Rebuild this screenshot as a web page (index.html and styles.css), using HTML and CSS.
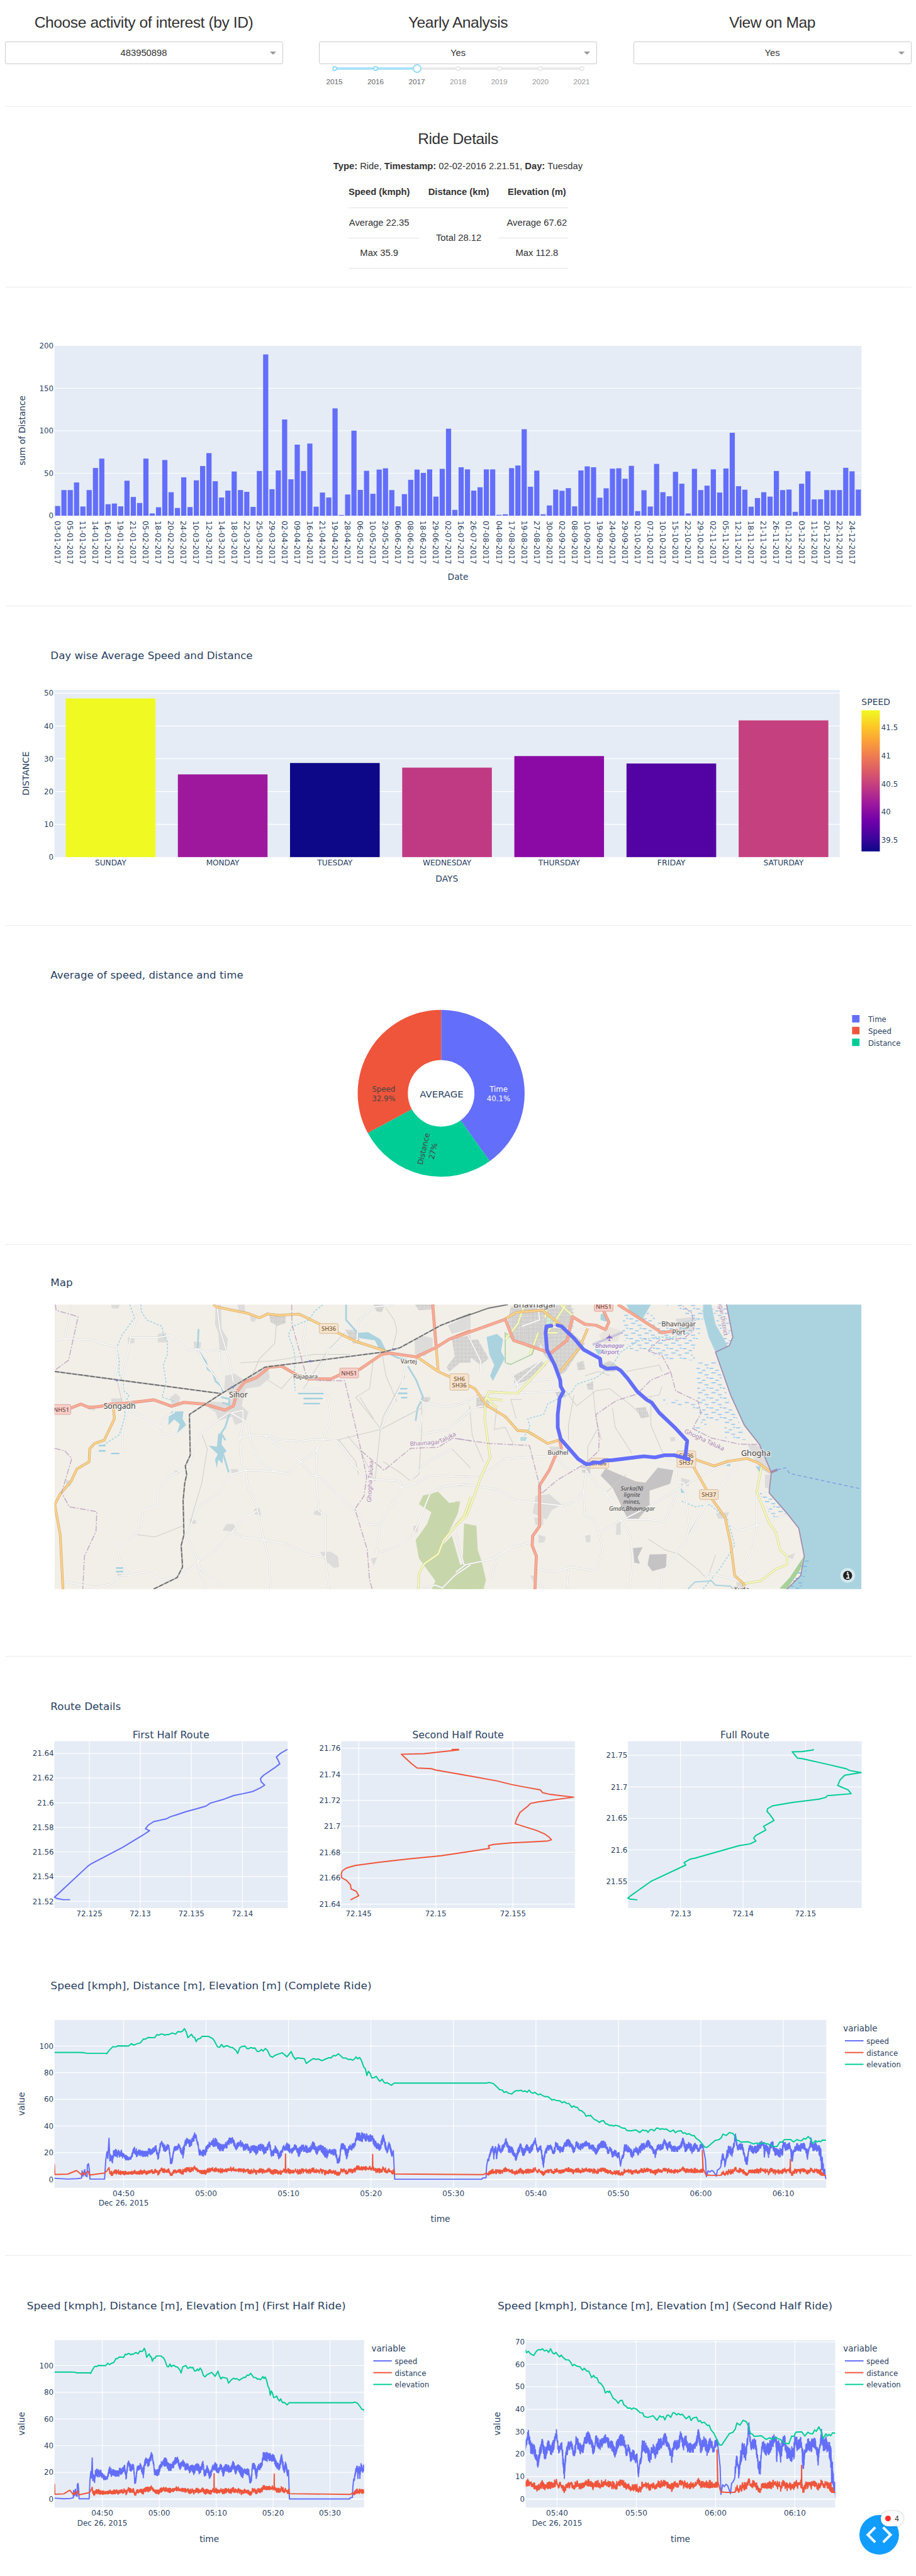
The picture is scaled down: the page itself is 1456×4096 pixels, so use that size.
FILE: index.html
```html
<!DOCTYPE html>
<html lang="en">
<head>
<meta charset="utf-8">
<title>Ride Dashboard</title>
<link rel="stylesheet" href="styles.css">
</head>
<body>
<header class="controls">
  <div class="control">
    <h5>Choose activity of interest (by ID)</h5>
    <div class="select"><span>483950898</span><i class="caret"></i></div>
  </div>
  <div class="control">
    <h5>Yearly Analysis</h5>
    <div class="select"><span>Yes</span><i class="caret"></i></div>
    <div class="slider">
      <div class="stop on"><i class="dot"></i><b>2015</b></div>
      <div class="stop on"><i class="dot"></i><b>2016</b></div>
      <div class="stop on current"><i class="dot"></i><b>2017</b></div>
      <div class="stop"><i class="dot"></i><b>2018</b></div>
      <div class="stop"><i class="dot"></i><b>2019</b></div>
      <div class="stop"><i class="dot"></i><b>2020</b></div>
      <div class="stop"><i class="dot"></i><b>2021</b></div>
    </div>
  </div>
  <div class="control">
    <h5>View on Map</h5>
    <div class="select"><span>Yes</span><i class="caret"></i></div>
  </div>
</header>
<hr>
<section class="details">
  <h5>Ride Details</h5>
  <p><strong>Type:</strong> Ride, <strong>Timestamp:</strong> 02-02-2016 2.21.51, <strong>Day:</strong> Tuesday</p>
  <table>
    <colgroup><col class="c1"><col class="c2"><col class="c3"></colgroup>
    <thead><tr><th class="left">Speed (kmph)</th><th>Distance (km)</th><th class="right">Elevation (m)</th></tr></thead>
    <tbody>
      <tr><td class="left">Average 22.35</td><td rowspan="2">Total 28.12</td><td class="right">Average 67.62</td></tr>
      <tr><td class="left">Max 35.9</td><td class="right">Max 112.8</td></tr>
    </tbody>
  </table>
</section>
<hr>
<svg class="chart" id="yearly" viewBox="0 580 1849 643"></svg>
<hr>
<svg class="chart" id="weekday" viewBox="0 1224 1849 643"></svg>
<hr>
<svg class="chart" id="average" viewBox="0 1868 1849 643"></svg>
<hr>
<svg class="chart" id="map" viewBox="0 2512 1849 831"></svg>
<hr>
<svg class="chart" id="route" viewBox="0 3344 1849 563"></svg>
<svg class="chart" id="complete" viewBox="0 3907 1849 645"></svg>
<hr>
<div class="last">
  <svg class="chart" id="halves" viewBox="0 4553 1849 647"></svg>
  <div class="debug">
    <svg viewBox="0 0 80 80"><path d="M32 25 17 40 32 55M48 25 63 40 48 55"/></svg>
    <span class="errors"><i></i>4</span>
  </div>
</div>
<script src="script.js"></script>
</body>
</html>
```
FILE: styles.css
```css
* { box-sizing: border-box; }
body {
  margin: 0;
  width: 1456px;
  height: 4096px;
  overflow: hidden;
  background: #fff;
  color: #323232;
  font-family: "Liberation Sans", Arial, sans-serif;
  font-size: 14.76px;
}
hr { height: 1px; margin: 0 7.5px; border: 0; background: #ebebeb; }
h5 { margin: 0; font-size: 24.6px; font-weight: 400; line-height: 28px; letter-spacing: -.42px; text-align: center; }

.controls { display: grid; grid-template-columns: repeat(3, 442px); justify-content: space-between; height: 169px; padding: 22px 7.5px 0; }
.control { padding: 0; }
.select { position: relative; display: flex; align-items: center; justify-content: center; height: 35.5px; margin-top: 16px; border: 1px solid #ccc; border-radius: 3px; }
.caret { position: absolute; right: 10px; top: 14.5px; border: 5px solid transparent; border-top-color: #999; border-bottom: 0; }

.slider { display: grid; grid-template-columns: repeat(7, 65.5px); justify-content: center; margin: 0 -10px; padding-top: 2px; }
.stop { position: relative; display: flex; flex-direction: column; align-items: center; height: 36px; color: #999; font-size: 11.8px; }
.stop b { font-weight: 400; margin-top: 19px; line-height: 14px; height: 14px; }
.stop::before { content: ""; position: absolute; top: 3px; left: 50%; width: 65.5px; height: 4px; background: #e9e9e9; }
.stop:last-child::before { display: none; }
.on { color: #666; }
.on:not(.current)::before { background: #abe2fb; }
.dot { position: absolute; z-index: 1; top: 1px; width: 8px; height: 8px; border: 2px solid #e9e9e9; border-radius: 50%; background: #fff; }
.on .dot { border-color: #96dbfa; }
.current .dot { top: -2px; width: 14px; height: 14px; }

.details { display: flex; flex-direction: column; align-items: center; height: 286px; padding-top: 37px; }
.details p { margin: 18px 0 0; line-height: 22px; }
table { width: 349px; margin-top: 6px; table-layout: fixed; border-collapse: collapse; line-height: 18px; }
.c1 { width: 112.4px; }
.c2 { width: 126.4px; }
.c3 { width: 110.2px; }
th, td { padding: 0; text-align: center; border-bottom: 1px solid #e1e1e1; white-space: nowrap; }
th { height: 49px; }
td { height: 48px; }
.left { padding-right: 14px; }
.right { padding-left: 12px; }

.chart { display: block; width: 1456px; overflow: hidden; font-family: "DejaVu Sans", Verdana, sans-serif; }
.last { position: relative; }
.debug { position: absolute; left: 1366px; top: 412px; width: 63px; height: 63px; border-radius: 50%; background: #119dff; }
.debug svg { display: block; width: 63px; height: 63px; fill: none; stroke: #fff; stroke-width: 5; }
.errors { position: absolute; left: 34px; top: -6px; width: 36px; height: 24px; display: flex; align-items: center; justify-content: center; gap: 6px; border-radius: 12px; background: #fff; box-shadow: 0 0 3px rgba(0,0,0,.3); font-size: 12px; }
.errors i { width: 9px; height: 9px; border-radius: 50%; background: #ff2d2d; }
```
FILE: script.js
```js
const INK = '#2a3f5f', BG = '#e5ecf6', BLUE = '#636efa', RED = '#ef553b', GREEN = '#00cc96';
const $ = id => document.getElementById(id);
const rect = (x, y, w, h, fill, extra = '') => `<rect x="${x}" y="${y}" width="${w}" height="${h}" fill="${fill}" ${extra}/>`;
const line = (x1, y1, x2, y2, c = '#fff', w = 1.5) => `<path d="M${x1} ${y1}L${x2} ${y2}" stroke="${c}" stroke-width="${w}" fill="none"/>`;
function text(x, y, s, size = 15, o = {}) {
  return `<text x="${x}" y="${y}" dy="${size * .36}" font-size="${size}" text-anchor="${o.a || 'middle'}" fill="${o.fill || INK}"` +
    (o.rot ? ` transform="rotate(${o.rot} ${x} ${y})"` : '') +
    (o.w ? ` textLength="${o.w}" lengthAdjust="spacingAndGlyphs"` : '') + ` ${o.x || ''}>${s}</text>`;
}
const poly = (pts, c, w = 2.5, extra = '') =>
  `<polyline points="${pts.map(p => p.map(v => v.toFixed(1)).join(',')).join(' ')}" fill="none" stroke="${c}" stroke-width="${w}" stroke-linejoin="round" ${extra}/>`;
const parse = s => s.trim().split(/\s+/).map(p => p.split(',').map(Number));
const frame = (x0, y0, sx, sy) => s => parse(s).map(([x, y]) => [x0 + x * sx, y0 + y * sy]);

/* Yearly distance */
{
  const tops = [1067,977,977,934,1070,977,852,799,1057,1053,1069,924,1016,1050,799,1109,1074,807,989,1078,905,1073,922,841,768,927,1019,980,872,977,987,1072,869,210,972,866,578,916,720,869,714,1071,991,1019,515,1118,1002,641,976,868,998,861,854,977,1069,1000,919,861,880,860,1014,857,630,1089,848,860,980,961,860,860,1117,1114,853,838,633,958,867,1114,1064,974,981,966,1069,866,843,848,1020,967,856,854,913,840,1096,978,1070,829,989,1012,874,941,1109,857,977,952,860,991,855,653,955,975,1071,1022,989,1014,869,977,974,1100,941,871,1030,1029,977,977,977,851,871,974];
  const dates = '03-01 05-01 11-01 14-01 16-01 19-01 21-01 05-02 18-02 20-02 24-02 10-03 12-03 14-03 18-03 22-03 25-03 29-03 02-04 09-04 16-04 21-04 19-04 28-04 06-05 10-05 29-05 06-06 08-06 18-06 29-06 02-07 16-07 26-07 07-08 04-08 17-08 19-08 27-08 30-08 02-09 08-09 10-09 19-09 24-09 29-09 02-10 07-10 10-10 15-10 22-10 29-10 02-11 05-11 12-11 18-11 21-11 26-11 01-12 03-12 11-12 20-12 22-12 24-12'.split(' ');
  let s = rect(110, 698, 1629, 343, BG);
  for (let v = 0; v <= 200; v += 50) {
    const y = 1041 - v * 1.715;
    if (v && v < 200) s += line(110, y, 1739, y);
    s += text(108, y, v, 15, { a: 'end' });
  }
  const step = 1629 / 128;
  tops.forEach((t, i) => { const h = (1122 - t) * .3571; s += rect(110 + step * (i + .09), 1041 - h, step * .82, h, BLUE); });
  dates.forEach((d, i) => { s += text(110 + step * (2 * i + .5) - .5, 1051, d + '-2017', 15, { a: 'start', rot: 90, w: 88 }); });
  s += text(44.5, 869, 'sum of Distance', 17.5, { rot: -90, w: 141 }) + text(924.5, 1164, 'Date', 17.5);
  $('yearly').innerHTML = s;
}

/* Weekday averages */
{
  let s = rect(110, 1393, 1585, 337.5, BG) + text(102, 1323.5, 'Day wise Average Speed and Distance', 21.25, { a: 'start', w: 408 });
  for (let v = 0; v <= 50; v += 10) {
    const y = 1730.5 - v * 6.62;
    if (v) s += line(110, y, 1695, y);
    s += text(108, y, v, 15, { a: 'end' });
  }
  [['SUNDAY', 360, '#f0f921', 63], ['MONDAY', 820, '#9e189d', 67], ['TUESDAY', 751, '#0d0887', 71], ['WEDNESDAY', 779, '#c03a83', 98],
   ['THURSDAY', 709, '#8b0aa5', 84], ['FRIDAY', 754, '#5302a3', 57], ['SATURDAY', 493, '#c5407e', 81]].forEach(([d, t, c, w], i) => {
    const h = (1321 - t) / 3;
    s += rect(110 + 226.4 * (i + .1), 1730.5 - h, 181, h, c) + text(110 + 226.4 * (i + .5), 1742, d, 15, { w });
  });
  const plasma = ['#0d0887', '#46039f', '#7201a8', '#9c179e', '#bd3786', '#d8576b', '#ed7953', '#fb9f3a', '#fdca26', '#f0f921'];
  s += `<linearGradient id="plasma" x1="0" y1="1" x2="0" y2="0">${plasma.map((c, i) => `<stop offset="${i / 9}" stop-color="${c}"/>`).join('')}</linearGradient>`;
  s += rect(1739, 1434, 37, 285, 'url(#plasma)') + text(1739, 1416.5, 'SPEED', 17.5, { a: 'start', w: 58 });
  [['41.5', 1469], ['41', 1525.6], ['40.5', 1583], ['40', 1639], ['39.5', 1696]].forEach(([v, y]) => s += text(1779, y, v, 15, { a: 'start' }));
  s += text(52, 1561.5, 'DISTANCE', 17.5, { rot: -90, w: 89 }) + text(902, 1774.5, 'DAYS', 17.5);
  $('weekday').innerHTML = s;
}

/* Donut */
{
  const cx = 890.5, cy = 2206.3, R = 168.5, r = 67.3;
  const at = (q, p) => `${cx + q * Math.sin(p * 2 * Math.PI)} ${cy - q * Math.cos(p * 2 * Math.PI)}`;
  const slice = (a, b, c) => `<path fill="${c}" d="M${at(R, a)}A${R} ${R} 0 0 1 ${at(R, b)}L${at(r, b)}A${r} ${r} 0 0 0 ${at(r, a)}Z"/>`;
  let s = text(102, 1967, 'Average of speed, distance and time', 21.25, { a: 'start', w: 389 });
  s += slice(0, .401, BLUE) + slice(.401, .671, GREEN) + slice(.671, 1, RED);
  s += text(1006.5, 2198, 'Time', 15, { fill: '#fff' }) + text(1006.5, 2216.7, '40.1%', 15, { fill: '#fff' });
  s += text(774.5, 2198, 'Speed', 15, { fill: '#444' }) + text(774.5, 2216.7, '32.9%', 15, { fill: '#444' });
  s += text(855, 2318.5, 'Distance', 15, { fill: '#444', rot: -77 }) + text(874, 2323, '27%', 15, { fill: '#444', rot: -77 });
  s += text(891.5, 2207.5, 'AVERAGE', 18.75, { w: 88 });
  [['Time', BLUE], ['Speed', RED], ['Distance', GREEN]].forEach(([n, c], i) => {
    s += rect(1720, 2048.3 + i * 23.8, 15, 15, c) + text(1752.5, 2057 + i * 23.8, n, 15, { a: 'start' });
  });
  $('average').innerHTML = s;
}

/* Map */
{
  const A = frame(80, 2560, .5548, .4337), B = frame(920, 2560, .5548, .4337);
  const area = (p, c, extra = '') => `<polygon points="${p.map(q => q.join(',')).join(' ')}" fill="${c}" ${extra}/>`;
  const road = (list, f, inner, w, casing, cw) => list.map(p => poly(f(p), casing, cw)).join('') + list.map(p => poly(f(p), inner, w)).join('');
  const minor = (list, f) => list.map(p => poly(f(p), '#cfcecb', 1.3)).join('');
  const NOTO = 'font-family="Noto Sans" stroke="#f5f2ed" stroke-width="2.5" paint-order="stroke"';
  const label = (f, p, s, size, o = {}) => { const [x, y] = f(p)[0]; return text(x, y, s, size, { fill: '#444', x: NOTO, ...o }); };
  const shield = (f, p, rows, red) => {
    const [x, y] = f(p)[0], h = rows.length > 1 ? 33 : 20;
    return rect(x - 19, y - h / 2, 38, h, red ? '#f6cfc8' : '#f6e3cd', `rx="2.5" stroke="${red ? '#dfa297' : '#d9b88f'}" stroke-width="1.2"`) +
      rows.map((r, i) => text(x, y + (i - (rows.length - 1) / 2) * 13.5, r, 12, { fill: red ? '#7c4a45' : '#7a5c38', x: 'font-family="Noto Sans" font-weight="500"' })).join('');
  };
  let s = text(102, 2588.6, 'Map', 21.25, { a: 'start' });
  s += `<defs><clipPath id="mc"><rect x="110" y="2633" width="1629" height="574.5"/></clipPath>
    <pattern id="wet" width="27" height="20" patternUnits="userSpaceOnUse"><path d="M1 2h8M13 6h7M5 11h9M18 15h8M22 1h4" stroke="#55a8ee" stroke-width="1.2"/></pattern>
    <pattern id="res" width="8" height="8" patternUnits="userSpaceOnUse"><rect width="8" height="8" fill="#dbdad8"/><path d="M0 3h8M3 0v8M6 3v5" stroke="#c8c7c5" stroke-width="1"/></pattern></defs><g clip-path="url(#mc)">`;
  s += rect(110, 2633, 1629, 575, '#f2efe9');

  /* settlements */
  ['640,170 660,170 662,280 685,330 680,380 655,390 650,300 638,260','675,500 710,490 745,520 830,460 838,510 800,550 750,560 735,640 760,670 750,710 710,730 700,690 650,710 640,670 615,650 620,620 690,625 700,600 672,560','475,600 495,582 512,600 505,635 480,635','430,305 460,300 462,345 430,345','560,340 588,345 585,372 562,372','320,320 345,320 345,348 322,350','260,170 292,170 285,188 262,186','260,605 300,605 300,630 262,630','170,635 205,640 200,662 175,655','720,168 745,168 748,205 725,200','765,215 795,225 780,252 768,245','665,1220 680,1190 705,1190 715,1215 700,1225','780,1120 800,1115 806,1150 782,1145','1000,1130 1025,1125 1022,1152 996,1145','1020,1320 1060,1320 1085,1340 1090,1390 1070,1395 1040,1360','1110,285 1150,285 1165,350 1140,350','1365,330 1395,315 1430,325 1430,375 1400,410 1365,400','1485,265 1568,215 1568,280 1500,305','545,1165 570,1175 568,1190 550,1188','95,985 118,990 112,1015 98,1010','485,940 510,945 505,958','695,935 722,935 720,955 700,955','280,1420 300,1425 290,1442','1360,1200 1378,1195 1375,1230 1360,1225','1205,1350 1228,1345 1215,1385'].forEach(p => s += area(A(p), '#dddcdb'));
  ['835,215 895,215 895,255 865,268 840,250','1365,168 1440,168 1430,190 1380,195','1215,168 1255,170 1245,205 1225,200','1500,330 1568,310 1568,440 1530,440 1490,480 1480,460 1510,410','1115,290 1160,295 1165,345 1135,340','1390,600 1422,600 1415,625 1392,622'].forEach(p => s += area(A(p), 'url(#res)'));
  ['200,180 420,170 430,240 420,300 470,350 440,400 420,440 400,480 375,500 345,440 320,400 310,350 300,380 210,340 195,290 190,240','0,340 80,330 120,420 90,450 60,420 0,400','345,400 420,420 400,480 380,480','210,500 310,430 330,450 250,530 215,550','525,450 560,430 585,450 580,480 540,480','475,540 500,525 500,565 482,565','360,570 395,575 400,600 370,600','75,590 115,590 125,650 75,650','440,440 465,430 470,470 445,475','655,650 690,645 705,690 675,700','455,915 490,925 490,955 460,950'].forEach(p => s += area(B(p), 'url(#res)'));
  ['340,830 385,830 400,870 350,875','290,1060 340,1050 385,1100 350,1125 330,1170 280,1140','285,1160 318,1160 318,1195 290,1195','300,1240 328,1250 322,1275 302,1278','585,1180 600,1180 600,1240 583,1240','830,845 820,890 835,895','945,1140 995,1135 985,1165 955,1165','820,975 850,985 848,1015 820,1010','1060,815 1110,830 1135,920 1145,960 1105,930 1080,870','1125,960 1145,960 1145,1030 1125,1020','800,235 870,225 860,290 815,300','470,1245 490,1240 490,1275 475,1275','270,1430 290,1430 285,1465','1205,1340 1235,1325 1225,1355','1020,1460 1060,1465 1050,1493 1025,1493','780,785 798,785 798,805 782,805'].forEach(p => s += area(B(p), '#dddcdb'));

  /* woods, mine and airport */
  s += area(A('1395,1058 1450,1040 1490,1092 1530,1085 1522,1140 1465,1290 1500,1245 1530,1380 1545,1380 1545,1188 1568,1195 1568,1500 1425,1500 1440,1455 1380,1350 1368,1265 1410,1190 1425,1135 1380,1098'), '#c8d7ab');
  s += area(B('0,1085 15,1087 0,1165'), '#c8d7ab') + area(B('30,1188 75,1198 80,1310 95,1370 110,1450 100,1500 0,1500 0,1405 25,1375'), '#c8d7ab');
  ['545,932 655,992 690,998 735,928 792,940 780,1003 705,1035 705,1105 665,1165 625,1165 570,1020 527,965','645,1303 680,1298 662,1345 670,1375 650,1370','705,1332 767,1330 765,1392 715,1410 698,1380'].forEach(p => s += area(B(p), '#c5c3c4'));
  s += area(B('520,310 560,272 600,290 590,340 540,350'), '#e9e5de') + poly(B('498,355 608,297'), '#c9c7dc', 5);
  s += area(B('335,210 352,218 352,250 330,262'), '#cbf0d8') + area(B('180,300 215,340 285,375 278,400 200,447 180,440'), '#edf0e2', 'stroke="#a6cfa2" stroke-width="2"');

  /* wetlands */
  ['610,200 680,240 700,200 740,250 900,260 880,330 860,400 880,430 740,420 700,385 640,385 605,320','760,168 900,168 900,235 850,240 830,200','930,170 985,170 1005,330 985,360 960,290','875,440 950,430 990,600 1060,800 980,790 975,705 890,715 880,620','750,600 880,630 885,660 760,630','865,740 900,710 920,715 880,775','1100,1030 1150,1050 1205,1150 1150,1165','1265,1345 1285,1355 1255,1500 1215,1490'].forEach(p => s += area(B(p), 'url(#wet)'));
  [['940,583 1035,583','960,606 1030,606','960,630 1020,630'], ['1305,560 1338,560','1303,582 1338,582','1315,602 1338,602'], ['215,825 240,825','215,850 240,850','260,862 290,862'], ['278,1395 304,1395','278,1412 304,1412']].flat().forEach(p => s += poly(A(p), '#9fd0e0', 3));

  /* water */
  s += area(B('985,168 1476,168 1476,1500 1200,1500 1255,1430 1268,1340 1248,1210 1205,1140 1140,1045 1148,950 1105,820 1050,730 1000,590 945,390 995,360 1008,320'), '#aad3df');
  s += area(B('1265,1343 1255,1400 1205,1493 1178,1490 1215,1440'), '#a8d09a') + area(B('1268,1345 1285,1355 1258,1500 1215,1495'), 'url(#wet)');
  s += area(B('900,168 930,168 945,260 990,362 945,390 920,320 900,220'), '#aad3df') + area(B('620,168 710,168 680,235 640,210'), '#aad3df');
  s += area(B('112,320 150,305 172,330 165,385 178,420 145,500 135,525 125,500 140,450 122,400'), '#aad3df') + area(B('527,215 540,208 555,235 545,248 527,240'), '#aad3df') + area(B('505,375 545,380 520,405'), '#aad3df') + area(B('1090,920 1110,925 1105,950'), '#aad3df') + area(B('985,900 1000,905 998,922 985,920'), '#aad3df') + area(B('818,1020 833,1045 820,1045'), '#aad3df');
  s += area(A('480,667 523,665 520,700 533,730 500,768 510,725 490,703 468,730 470,690'), '#aad3df') + area(A('650,768 665,775 662,820 680,850 668,865 665,910 650,890 645,930 638,890 648,865 615,825 645,830'), '#aad3df');
  s += area(A('1150,300 1195,297 1240,330 1260,380 1290,400 1265,400 1235,375 1220,335 1165,325'), '#aad3df');
  ['1115,168 1115,240 1155,298','1255,385 1300,415 1335,425','1340,455 1370,520 1395,600 1375,650 1368,710','578,283 575,380 605,435 612,470 630,485 640,525 662,550 668,580','660,600 690,608 690,635 665,625','690,680 675,740 660,768 676,800','668,865 688,950'].forEach(p => s += poly(A(p), '#aad3df', 3.6));
  s += poly(B('845,1493 870,1460 930,1455 945,1475 1000,1480 1010,1493'), '#aad3df', 2.5);
  ['328,168 345,230 300,310 280,370 290,430 288,490 305,530 305,570 325,590 310,630 310,690 290,775 235,820','368,168 370,200 390,240 445,270 450,310 465,340 465,400 450,450 460,530 445,600 495,620','1030,170 1000,200 980,240 920,270 905,310 925,380 930,430 925,500 930,570'].forEach(p => s += poly(A(p), '#9fd4e4', 2, 'stroke-dasharray="4 3"'));
  ['900,235 830,250 800,320 730,320 660,340 600,390 570,450 510,510 440,540 420,580 335,630 320,680 262,700 270,740 245,790','822,1083 870,1110 925,1100 990,1170 1015,1290 960,1400 900,1493'].forEach(p => s += poly(B(p), '#9fd4e4', 2, 'stroke-dasharray="4 3"'));
  s += area(B('235,785 260,785 255,803 235,803'), '#b9dce4');

  /* minor roads */
  s += minor(['283,530 300,620','590,770 610,840 590,1000 555,1150 540,1230','355,1240 420,1250 520,1200','865,220 855,350 800,420 770,510','1215,420 1200,560 1150,600 1240,745 1250,690 1330,500','1240,745 1220,990 1165,845 1120,780','1165,600 1215,700','1110,300 1050,380 1000,480 960,560','830,520 880,560 920,500','1390,600 1390,760 1380,960 1350,990','1240,350 1260,500 1300,620','1500,840 1568,930','1260,185 1290,240 1300,290 1285,370','1080,800 1240,750 1390,650','1040,800 1090,800 1150,900 1160,960','1250,900 1310,950 1350,990','730,440 850,430 1000,400 1130,400'], A);
  s += minor(['400,570 440,640 510,570 560,560 640,640 680,690','570,650 580,740 640,860','710,600 710,730 760,880','515,750 480,830 480,900','620,480 740,450 750,480','50,640 60,780 100,900','150,640 140,750 180,740 210,820','410,800 410,730 430,590','500,570 510,700 530,800','620,960 550,1040','700,1260 760,1310 810,1330 880,1400 910,1440','945,1335 920,1430','920,1080 850,1230','470,500 520,480 560,500','220,700 200,610 240,610','750,550 740,590 690,600'], B);
  for (let i = 0; i < 9; i++) s += minor([`${215 + i * 22},${190 + (i % 3) * 20} ${225 + i * 20},${330 + (i % 4) * 14}`, `205,${205 + i * 16} 430,${190 + i * 16}`], B);

  /* local roads */
  s += road(['55,333 90,328 190,333 240,355 278,365 285,430 275,500','115,168 92,325','350,168 365,175 350,240 330,320 320,400 300,520 305,600 320,660 300,770 303,850','330,322 430,322 475,312 540,380 575,375 600,390 645,378 680,390','645,168 655,280 690,430 705,530','655,390 655,450 675,490','575,378 600,440 650,520 680,590','320,660 375,690 440,740 455,785 500,765','490,640 490,670 450,700 440,740','690,670 600,750 560,840 545,920 470,970 430,1030 430,1100 375,1130 370,1200 350,1235 285,1310 290,1350 325,1425','700,672 740,660 740,720 728,790 770,775 840,780 870,798 950,805 1000,795 1080,800 1130,900 1190,980 1310,990 1318,1020 1240,1190 1225,1330','695,672 760,720 765,790 800,900 860,950','820,780 950,900 990,965 1020,970 1080,1050 1150,1130 1190,1190 1235,1195','728,790 735,910 750,940 760,1030 790,1110 815,1260 835,1360 840,1493','690,960 750,940 850,945 900,955 950,900 1000,860 1030,800 1060,700 1050,600 1020,560 960,570','690,960 650,1050 575,1110 535,1240 570,1340 585,1400 655,1470','1010,830 1005,960 1015,1130 1040,1150 1040,1340 1052,1493','790,1130 750,1155 700,1225 640,1310 580,1360 565,1385 500,1440 440,1450 390,1412 320,1430 290,1432 260,1470 200,1485 90,1458','575,1385 605,1493','700,1225 740,1250 820,1265 890,1280 980,1335 1040,1345','1310,1020 1370,1000 1420,965 1568,970','1350,990 1400,910 1500,840','1225,1328 1310,1290 1360,1240 1420,1050 1470,1015 1568,1005','1370,600 1400,625 1480,645 1568,620','1330,445 1320,530 1240,750','1390,770 1490,750 1530,700 1568,665','1385,760 1390,690 1415,620','1390,1490 1440,1475 1465,1488 1510,1430 1568,1380','1510,1210 1530,1320 1545,1380','1290,170 1215,180 1160,245 1155,330 1050,380 1010,530','970,250 960,320 975,430 1000,520'], A, '#fff', 1.9, '#d0cfcc', 3.1);
  s += road(['40,300 90,430 90,480','0,640 70,600 120,590','0,720 60,650 100,640','180,440 225,540 225,580','225,580 375,572','215,540 310,430','300,180 305,240 240,270','345,270 400,280 440,290 500,270','340,400 360,500 345,570','110,590 260,525 350,515','0,1005 60,1010 150,1030 220,1080 390,1105 430,1085 465,1040 475,940','0,970 90,972 180,885 380,870 390,860','475,940 520,1020 570,1080 600,1170 635,1240 645,1370 632,1493','465,1040 470,1150 505,1175 520,1230 535,1310 510,1410','520,1235 600,1175 700,1110 820,1020 950,925 1000,905','620,1170 700,1170 760,1180 810,1030','740,870 800,900 805,990 830,1000 850,1200 840,1260 750,1420 745,1493','475,935 400,930 350,850','1040,895 910,1100 850,1240','1095,1040 1095,1200 1080,1310 1040,1430','990,1185 1035,1220 1095,1195 1205,1145','0,1415 35,1380 130,1355 200,1300 295,1270','0,1240 30,1380','150,1350 130,1440','290,1395 360,1415 420,1390 510,1410','410,1400 405,1493','295,1450 320,1493','1020,1450 920,1420 905,1440'], B, '#fff', 1.9, '#d0cfcc', 3.1);

  /* tertiary, state and national roads */
  s += road(['1568,1065 1545,1150 1470,1265 1450,1330 1400,1375 1380,1420 1378,1500'], A, '#f6fabb', 3, '#cfcf98', 4.6);
  s += road(['250,170 225,260 180,330','380,168 425,220','400,168 350,270 330,300 370,300','330,185 325,230','300,300 270,400','335,430 225,582 120,575 108,610 105,700 125,880 90,975 70,1050 40,1150 0,1200','110,605 170,615','150,650 110,600','1112,925 1095,1040 1140,1185 1165,1230 1180,1310 1205,1340 1205,1380 1165,1400 1110,1455 1048,1468'], B, '#f6fabb', 3, '#cfcf98', 4.6);
  s += road(['632,168 645,180 760,210 800,230 830,212 870,218 945,213 1020,260 1150,340 1260,385','1370,410 1450,480 1500,510 1568,550','1443,370 1450,480','268,640 272,700 235,800 200,815 182,840 180,900 135,935 115,990 75,1050 55,1100 75,1240 85,1500'], A, '#fbd18b', 3.6, '#d3a863', 5.2);
  s += road(['180,235 220,205 315,195 360,240 420,310','480,280 450,370 380,480','45,545 70,560 110,635 180,690 225,755 260,758 335,815 380,798','850,880 940,920 990,898 1060,885 1100,905 1148,950','850,890 930,1070 980,1160 1000,1280 1015,1430 1048,1470 1048,1500'], B, '#fbd18b', 3.6, '#d3a863', 5.2);
  s += road(['55,660 110,652 150,632 180,648 220,643 260,632 310,628 415,612 480,642 525,624 600,632 675,660 705,640 720,570 745,530 790,508 835,460 880,455 940,500 980,515 1060,515 1110,485 1165,470 1245,400 1275,395 1370,412 1440,370 1490,330 1568,290','1430,168 1443,370'], A, '#f6ab96', 4.5, '#e28a75', 6);
  s += road(['0,320 180,237 210,335 280,365 345,395 405,335 425,225 470,260 510,265 545,285 557,250 535,190','590,168 750,300 808,288','378,800 385,840','365,865 340,940 305,1010 305,1200 280,1245 278,1290 293,1340 288,1500'], B, '#f6ab96', 4.5, '#e28a75', 6);

  /* railway and boundaries */
  ['55,480 660,583','415,1493 500,1440 520,1390 515,1290 525,1240 522,1080 528,1000 535,960 530,920 548,870 545,680 662,583 820,460 1250,390 1310,370 1460,265 1568,212'].forEach(p => { s += poly(A(p), '#b5b5b5', 3) + poly(A(p), '#666', 2, 'stroke-dasharray="9 3"'); });
  s += poly(B('0,238 120,185 190,168'), '#777', 2.4);
  ['281,521','702,553','984,432','1287,377'].forEach(p => { const [x, y] = A(p)[0]; s += rect(x - 2.5, y - 2, 5, 4, '#7a7fc0'); });
  const bd = 'stroke-dasharray="12 3 3 3" opacity=".8"';
  ['57,168 60,195 140,225 105,428 55,475','55,838 92,850 117,885 80,1045 108,1110 208,1133 205,1225 163,1340 157,1493','917,168 918,260 970,500 1020,523 1110,523 1170,850 1190,970 1180,1060 1147,1120 1192,1310 1200,1450 1210,1493','1170,850 1253,940 1350,838 1450,833 1503,790 1568,803'].forEach(p => s += poly(A(p), '#b79bbb', 1.9, bd));
  ['0,792 120,815 268,825 312,1048 370,985 470,910 520,850 522,790 510,680 585,615 660,585 710,520 782,483 750,405 698,385 740,335 830,325 865,290 860,210 820,168','782,483 800,570 882,620 892,675 862,745 930,790 1030,818 1105,820'].forEach(p => s += poly(B(p), '#b79bbb', 1.9, bd));
  s += poly(B('985,168 1008,320 995,360 945,390 1000,590 1050,730 1105,820 1148,950 1140,1045 1205,1140 1248,1210 1268,1340 1255,1430 1200,1500'), '#a08aae', 2.2);
  s += poly(B('1145,950 1170,937'), '#a08aae', 5) + poly(B('1170,937 1200,928 1215,955 1476,1027'), '#7a95e6', 1.6, 'stroke-dasharray="7 5"');

  s += shield(A, '79,657', ['NH51'], 1) + shield(A, '1126,487', ['NH51'], 1) + shield(A, '1052,280', ['SH36']) + shield(A, '1527,529', ['SH6', 'SH36']);
  s += shield(B, '538,177', ['NH51'], 1) + shield(B, '522,907', ['SH36']) + shield(B, '839,888', ['SH36', 'SH37']) + shield(B, '921,1053', ['SH37']);
  s += label(A, '291,641', 'Songadh', 15.5) + label(A, '723,589', 'Sihor', 15.5) + label(A, '967,502', 'Rajapara', 12) + label(A, '1343,433', 'Vartej', 12);
  s += label(B, '288,168', 'Bhavnagar', 17) + label(B, '811,260', 'Bhavnagar', 13.5) + label(B, '811,297', 'Port', 13.5) + label(B, '1092,861', 'Ghogha', 16) + label(B, '372,856', 'Budhel', 12.5) + label(B, '1040,1493', 'Kuda', 12.5);
  const air = { fill: '#8461c4', x: NOTO + ' font-style="italic"' };
  s += label(B, '560,359', 'Bhavnagar', 12, air) + label(B, '560,390', 'Airport', 12, air) + label(B, '560,322', '✈', 19, { rot: -90, fill: '#8461c4', x: 'font-family="DejaVu Sans"' });
  ['Surka(N)', 'lignite', 'mines,', 'Gmdc,Bhavnagar'].forEach((t, i) => s += label(B, `641,${1024 + i * 31}`, t, 12, { x: 'font-family="Noto Sans" font-style="italic"' }));
  const pur = { fill: '#a785b0' };
  s += label(A, '1402,812', 'Bhavnagar', 12, { ...pur, rot: -4 }) + label(A, '1484,787', 'Taluka', 12, { ...pur, rot: -27 }) + label(A, '1202,992', 'Ghogha Taluka', 12, { ...pur, rot: -87 });
  s += label(B, '905,798', 'Ghogha Taluka', 12.5, { ...pur, rot: 25 }) + label(B, '973,235', 'agar District', 12, { ...pur, rot: 80 });

  /* ride track */
  s += poly(B('348,267 330,270 327,300 332,380 360,450 380,520 382,550 392,573 378,605 371,680 371,740 382,795 445,887 475,912 490,910 500,903 525,905 540,895 570,893 685,875 725,880 760,870 795,870 848,889'), BLUE, 7.5, 'stroke-linecap="round"');
  s += poly(B('370,265 385,270 430,325 465,378 525,420 528,453 550,467 585,464 600,476 625,512 660,573 695,612 713,625 740,672 800,745 842,803 835,880'), BLUE, 7.5, 'stroke-linecap="round"');
  s += '<circle cx="1711" cy="3180" r="15" fill="#fff" opacity=".5"/><circle cx="1711" cy="3180" r="9.2" fill="#222"/><path d="M1709 3178h3.5v7M1708 3185.500h7" stroke="#fff" stroke-width="2.2" fill="none"/><circle cx="1711" cy="3174.500" r="1.6" fill="#fff"/></g>';
  $('map').innerHTML = s;
}

/* Route details */
{
  const sx = 1849 / 1568, F = frame(0, 3420, sx, 1 / 3);
  let s = text(102, 3444.5, 'Route Details', 21.25, { a: 'start', w: 142 });
  const panel = (l, r, name, w, xs, ys, c, pts) => {
    s += rect(l * sx, 3515, (r - l) * sx, 337, BG) + text((l + r) / 2 * sx, 3501.5, name, 20, { w });
    xs.forEach(([v, x]) => s += line(x * sx, 3515, x * sx, 3852) + text(x * sx, 3863, v, 15));
    ys.forEach(([v, y]) => s += line(l * sx, 3420 + y / 3, r * sx, 3420 + y / 3) + text((l - 1) * sx, 3420 + y / 3, v, 15, { a: 'end' }));
    s += poly(F(pts), c, 2.5);
  };
  panel(93, 492.5, 'First Half Route', 155, [['72.125', 153], ['72.13', 240], ['72.135', 327.5], ['72.14', 415]],
    [['21.64', 359], ['21.62', 508], ['21.6', 658], ['21.58', 806.5], ['21.56', 955], ['21.54', 1105], ['21.52', 1255]], BLUE,
    '120,1245 108,1245 98,1238 93,1230 98,1215 110,1175 150,1043 155,1030 210,928 245,853 256,827 249,815 254,793 263,772 284,756 292,742 302,731 318,712 335,696 352,679 360,660 381,639 400,614 417,602 433,589 446,567 453,551 447,530 446,511 451,492 470,446 479,422 476,400 473,381 480,359 492,334');
  panel(584, 984, 'Second Half Route', 185, [['72.145', 614], ['72.15', 746], ['72.155', 878]],
    [['21.76', 327.5], ['21.74', 486], ['21.72', 643], ['21.7', 799], ['21.68', 958], ['21.66', 1114], ['21.64', 1271.5]], RED,
    '600,1246 614,1221 610,1195 601,1180 600,1155 593,1128 585,1112 584,1090 586,1070 593,1053 608,1038 650,1018 700,998 755,979 800,955 838,934 836,918 845,910 875,901 910,895 938,889 944,882 940,866 933,848 918,825 882,785 884,760 890,717 903,680 908,662 922,652 982,624 940,606 929,597 925,580 900,564 875,547 850,525 800,493 746,460 738,451 714,447 704,420 695,390 687,364 726,361 755,349 785,338 785,334 773,335');
  panel(1075, 1475, 'Full Route', 99, [['72.13', 1165], ['72.14', 1272], ['72.15', 1379]],
    [['21.75', 370], ['21.7', 562], ['21.65', 752], ['21.6', 943], ['21.55', 1135]], GREEN,
    '1091,1246 1079,1242 1075,1235 1080,1220 1114,1135 1174,1035 1171,1020 1181,1000 1190,993 1265,918 1284,907 1294,890 1290,872 1294,855 1311,823 1307,801 1325,765 1320,740 1318,730 1313,710 1314,693 1322,677 1358,655 1402,636 1414,625 1416,615 1457,603 1452,580 1434,553 1438,520 1446,491 1474,475 1454,462 1449,452 1414,423 1375,392 1365,387 1356,349 1372,348 1392,338 1392,332');
  $('route').innerHTML = s;
}

/* Ride time series: minutes after 04:50 against value */
let seed = 11;
const rnd = () => (seed = (seed * 16807) % 2147483647) / 2147483647;
const T1 = x => (x - 423) / 28.2, T2 = x => (x - 266) / 28.25 + 50, V = y => (1256.5 - y) / 8.075;
const pts = (str, T) => parse(str).map(([x, y]) => [T(x), V(y)]);
function band(str, T) {
  const k = parse(str), out = [];
  for (let i = 0; i < k.length - 1; i++) {
    const [x0, h0, l0] = k[i], [x1, h1, l1] = k[i + 1], n = Math.max(2, Math.round((x1 - x0) / .75));
    for (let j = 0; j < n; j++) {
      const f = j / n, h = h0 + (h1 - h0) * f, l = l0 + (l1 - l0) * f, q = j % 2 ? rnd() * .5 : 1 - rnd() * .5;
      out.push([T(x0 + (x1 - x0) * f), V(h + (l - h) * q)]);
    }
  }
  return out;
}
const b1 = band('376,1105,1145 385,1110,1160 390,1070,1115 400,1080,1125 418,1080,1125 430,1110,1140 448,1120,1140 458,1055,1100 468,1075,1120 480,1075,1115 495,1085,1125 510,1070,1115 528,1065,1100 533,1040,1080 541,1105,1145 551,1010,1050 560,1045,1090 570,1055,1085 577,1025,1060 584,1140,1170 590,1120,1155 595,1050,1085 607,1050,1085 613,1035,1070 620,1075,1105 626,1060,1140 632,1025,1060 642,1000,1045 648,1020,1062 656,1005,1050 668,967,1010 676,1020,1050 682,1075,1110 695,1080,1120 703,1060,1110 712,1035,1070 722,1020,1060 738,1000,1060 750,1035,1085 762,1045,1090 775,1025,1070 787,1000,1045 797,1005,1040 806,1040,1085 815,1020,1060 828,1020,1065 835,1040,1090 846,1035,1070 855,1060,1105 866,1045,1080 876,1055,1115 886,1040,1085 895,1040,1085 905,1055,1110 912,1055,1090 921,1020,1065 930,1080,1130 943,1050,1090 955,1095,1145 970,1050,1080 985,1030,1090 998,1070,1110 1010,1040,1070 1021,1060,1135 1030,1045,1090 1045,1050,1095 1060,1060,1095 1072,1022,1070 1084,1065,1110 1092,1040,1080 1103,1050,1100 1117,1070,1135 1126,1070,1100 1140,1075,1110 1148,1070,1110 1154,1130,1168 1162,1110,1155 1166,1040,1080 1178,1040,1080 1186,1080,1138 1195,1040,1080 1207,1040,1085 1215,1020,1055 1221,968,1020 1235,972,1030 1250,975,1025 1262,985,1030 1274,985,1030 1280,1000,1060 1290,1035,1075 1300,1045,1090 1312,970,1020 1318,1030,1075 1325,1065,1100 1332,1020,1060 1340,1080,1118 1346,1075,1110', T1);
const b2 = band('101,1130,1145 105,1115,1145 110,1080,1110 118,1050,1085 122,1070,1140 128,1055,1085 132,1080,1155 137,1035,1075 145,1060,1105 155,1045,1075 163,1005,1045 173,1055,1100 182,1055,1095 198,1100,1145 213,1035,1080 223,1075,1120 235,1045,1080 245,1060,1100 255,1040,1080 263,1000,1040 272,1070,1100 282,1045,1080 292,1130,1195 298,1080,1105 308,1040,1085 315,1045,1070 327,1075,1125 335,1020,1060 345,1055,1095 356,1060,1100 367,1020,1060 378,1010,1055 388,1040,1075 398,1060,1110 405,1015,1055 415,1045,1085 430,1030,1065 440,1020,1055 452,1040,1080 460,1035,1080 472,1070,1110 486,1025,1065 500,1020,1065 508,1040,1080 514,1070,1110 520,1055,1090 530,1090,1130 537,1070,1105 545,1100,1145 550,1085,1120 556,1155,1195 561,1110,1130 566,1100,1130 569,1040,1095 580,1050,1090 595,1080,1130 608,1060,1095 618,1060,1115 630,1035,1080 640,1040,1080 651,1015,1055 662,1045,1080 675,1080,1125 683,1045,1075 697,1045,1090 707,1000,1045 717,1040,1080 725,1025,1060 732,1055,1090 752,1055,1090 762,1030,1070 771,1000,1045 778,1045,1095 790,1030,1065 802,1050,1105 813,1030,1070 823,1065,1095 833,1035,1065 840,1040,1070', T2);
const slow = pts('843,1100 847,1140 850,1240 856,1205 862,1212 868,1203 874,1208 880,1225 884,1237 888,1200 893,1195 898,1185', T2);
const b3 = band('900,1140,1190 907,1085,1140 914,1130,1185 920,1080,1145 928,1045,1095 938,1055,1125 945,1030,1075 949,975,1020 957,1045,1080 965,1035,1080 975,1045,1085 983,1110,1160 990,1120,1170 997,1040,1080 1007,1055,1100 1018,1050,1100 1030,1040,1090 1038,1020,1060 1045,1020,1065 1049,1050,1135 1055,1040,1075 1063,1065,1135 1070,1030,1070 1076,1020,1070 1086,1065,1125 1093,1065,1105 1100,1070,1130 1110,1060,1125 1115,1010,1060 1122,1040,1085 1136,1020,1070 1143,1085,1160 1151,1060,1110 1160,1040,1080 1172,1040,1090 1182,1030,1075 1190,1050,1095 1197,1080,1145 1203,1050,1080 1209,995,1070 1216,1040,1085 1225,1030,1080 1232,1045,1095 1240,1045,1120 1245,1110,1200 1248,1110,1210 1252,1195,1225 1257,1195,1230', T2);
const speed = [...pts('186,1251 232,1255 265,1253 279,1250 281,1205 284,1237 290,1197 293,1235 298,1240 299,1170 303,1162 306,1200 308,1255 358,1255 362,1140 366,1090 369,1130 373,1008', T1), ...b1, ...pts('1350,1256', T1), ...pts('81,1256 84,1248 95,1247 97,1180', T2), ...b2, ...slow, ...b3, ...pts('1260,1256', T2)];
const dist = b => b.map(([t, v]) => [t, Math.max(3, v * .24 + .6 + (rnd() - .5) * 2.6)]);
const spike = (b, x, y) => { const i = b.findIndex(p => p[0] > x); if (i > 0) b[i] = [b[i][0], V(y)]; return b; };
const distance = [...pts('186,1165 188,1227 232,1225 262,1203 280,1230 284,1215 290,1228 296,1215 302,1207 306,1231 358,1218 366,1205 373,1185', T1), ...spike(spike(dist(b1), T1(976), 1103), T1(1274), 1106), ...pts('1347,1195 1350,1224', T1), ...pts('85,1228 97,1218', T2), ...dist(b2), ...pts('836,1080 838,1190', T2), ...dist(slow), ...spike(dist(b3), T2(1137), 1135), ...pts('1260,1233', T2)];
const elevation = [...pts('186,488 265,488 285,489 297,493 360,493 365,496 373,477 386,453 395,455 403,448 440,449 450,435 458,444 468,436 480,430 491,406 497,408 507,397 529,399 537,380 544,383 551,376 557,377 564,384 570,379 577,380 589,370 601,377 609,361 617,364 624,360 631,344 637,362 643,399 655,378 661,395 666,397 671,423 677,406 684,404 691,391 714,391 728,405 733,417 744,454 751,457 758,439 765,456 772,448 779,448 788,457 795,457 807,475 813,494 821,458 827,453 838,449 845,465 851,465 859,458 866,463 872,460 880,482 887,481 894,470 900,480 908,464 915,476 924,509 932,517 940,506 952,498 965,490 982,514 996,483 1003,511 1011,530 1017,520 1041,526 1048,555 1060,538 1073,525 1080,530 1090,528 1101,538 1115,527 1125,520 1132,521 1141,506 1148,509 1158,496 1173,521 1184,522 1191,531 1199,529 1206,535 1213,527 1218,515 1224,527 1230,518 1236,535 1244,575 1250,588 1255,628 1260,602 1266,615 1272,643 1280,640 1287,633 1294,653 1300,663 1307,650 1313,668 1318,674 1324,671 1339,687 1348,674', T1),
  ...pts('96,674 105,670 120,676 130,693 142,714 151,716 157,730 164,725 171,734 183,740 192,725 200,719 208,720 214,716 221,724 229,721 236,729 243,716 250,731 256,735 262,729 269,739 275,745 281,739 288,748 298,756 307,756 314,764 321,777 327,772 335,778 348,781 356,793 363,786 371,796 379,797 389,820 396,812 402,820 408,820 415,838 421,840 432,855 438,875 445,869 450,873 453,868 466,894 475,900 484,912 490,903 498,901 504,918 512,923 518,930 526,929 532,934 538,929 550,934 562,946 571,947 577,960 590,963 608,957 622,973 632,957 638,962 645,960 650,972 658,955 664,955 671,963 679,946 685,947 692,954 698,949 706,954 712,951 726,968 737,958 744,974 751,965 763,962 770,978 776,974 782,983 790,980 802,992 808,991 815,1008 825,1020 837,1046 845,1062 853,1062 880,1021 893,1016 901,1005 907,983 918,991 929,973 941,979 947,993 955,1020 962,1023 968,1031 994,1029 1011,1042 1024,1036 1032,1042 1047,1034 1053,1040 1060,1041 1067,1047 1078,1056 1092,1058 1102,1030 1110,1031 1117,1016 1138,1015 1149,1030 1160,1016 1168,1021 1177,1022 1184,1008 1190,1013 1199,997 1207,1013 1214,1039 1224,1022 1230,1030 1235,1024 1241,1029 1248,1018 1260,1020', T2)];

let plotCount = 0;
function timePlot(o) {
  const { l, r, top, bot, y0, u, x50, m, lg } = o, id = 'plot' + plotCount++;
  const X = t => x50 + t * m, Y = v => y0 - v * u;
  let s = text(o.tx, o.ty, o.title, 21.25, { a: 'start', w: o.tw }) + rect(l, top, r - l, bot - top, BG) + `<clipPath id="${id}">${rect(l, top, r - l, bot - top, '#000')}</clipPath>`;
  o.times.forEach(([t, n], i) => {
    s += line(X(t), top, X(t), bot) + text(X(t), bot + 11, n, 15, { w: 44.2 });
    if (!i) s += text(X(t), bot + 31, 'Dec 26, 2015', 15, { w: 101 });
  });
  o.vals.forEach(v => s += line(l, Y(v), r, Y(v), '#fff', v ? 1.5 : 2.5) + text(l - 2, Y(v), v, 15, { a: 'end' }));
  s += `<g clip-path="url(#${id})">`;
  [[speed, BLUE], [distance, RED], [elevation, GREEN]].forEach(([d, c]) => s += poly(d.map(([t, v]) => [X(t), Y(v)]), c, 2.5));
  s += '</g>' + text(o.vx, (top + bot) / 2, 'value', 17.5, { rot: -90 }) + text((l + r) / 2, o.lx, 'time', 17.5);
  s += text(lg, top + 17.3, 'variable', 17.5, { a: 'start', w: 69 });
  [['speed', BLUE], ['distance', RED], ['elevation', GREEN]].forEach(([n, c], i) => {
    const y = top + 42 + i * 23.8;
    s += line(lg + 3.5, y, lg + 41, y, c, 2.5) + text(lg + 47, y + .8, n, 15, { a: 'start' });
  });
  return s;
}
$('complete').innerHTML = timePlot({ l: 110, r: 1668, top: 4077, bot: 4416, y0: 4398.8, u: 2.692, x50: 249.5, m: 16.645, lg: 1702,
  tx: 102, ty: 4007.7, tw: 648, vx: 43.5, lx: 4479, title: 'Speed [kmph], Distance [m], Elevation [m] (Complete Ride)',
  vals: [0, 20, 40, 60, 80, 100], times: [[0, '04:50'], [10, '05:00'], [20, '05:10'], [30, '05:20'], [40, '05:30'], [50, '05:40'], [60, '05:50'], [70, '06:00'], [80, '06:10']] });
$('halves').innerHTML = timePlot({ l: 110, r: 735, top: 4723, bot: 5061, y0: 5044, u: 2.695, x50: 206.5, m: 11.49, lg: 750,
  tx: 54, ty: 4653.3, tw: 644, vx: 43.5, lx: 5124, title: 'Speed [kmph], Distance [m], Elevation [m] (First Half Ride)',
  vals: [0, 20, 40, 60, 80, 100], times: [[0, '04:50'], [10, '05:00'], [20, '05:10'], [30, '05:20'], [40, '05:30']] }) +
  timePlot({ l: 1061, r: 1686, top: 4723, bot: 5061, y0: 5044, u: 4.534, x50: 324.5, m: 16, lg: 1702,
  tx: 1004.5, ty: 4653.3, tw: 676, vx: 1003, lx: 5124, title: 'Speed [kmph], Distance [m], Elevation [m] (Second Half Ride)',
  vals: [0, 10, 20, 30, 40, 50, 60, 70], times: [[50, '05:40'], [60, '05:50'], [70, '06:00'], [80, '06:10']] });
```
